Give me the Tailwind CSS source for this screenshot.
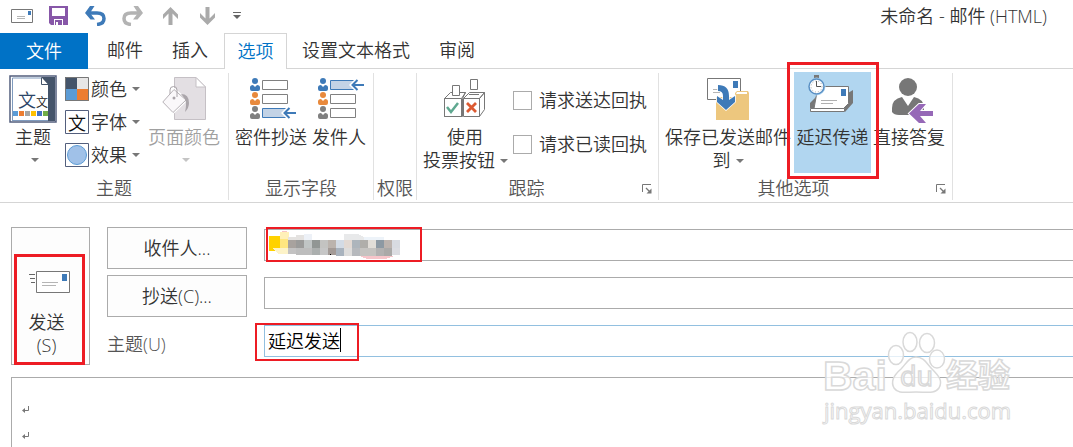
<!DOCTYPE html>
<html lang="zh-CN">
<head>
<meta charset="utf-8">
<meta name="viewport" content="width=device-width, initial-scale=1">
<title>未命名 - 邮件 (HTML)</title>
<script src="https://cdn.jsdelivr.net/npm/@tailwindcss/browser@4"></script>
</head>
<body class="relative flex min-h-screen flex-col overflow-hidden bg-white font-['Open_Sans','Noto_Sans_CJK_SC',sans-serif] text-[18px] leading-[23px] font-[350] text-[#333]">

<svg class="hidden">
  <defs>
    <symbol id="caret" viewBox="0 0 8 4"><path d="M0 0h8L4 4z" fill="currentColor"/></symbol>
    <symbol id="launcher" viewBox="0 0 10 10"><path d="M.5 8V.5H9" fill="none" stroke="#777"/><path d="M4 4l4 4" stroke="#777" stroke-width="1.3"/><path d="M9.5 4.500v5h-5z" fill="#777"/></symbol>
    <symbol id="person" viewBox="0 0 10 13"><circle cx="5" cy="3" r="3" fill="currentColor"/><path d="M2 13Q0 13 0 11V9.500Q0 7 3 7l2 2 2-2q3 0 3 2.500V11q0 2-2 2z" fill="currentColor"/></symbol>
  </defs>
</svg>

<!-- Title bar -->
<header class="flex h-[33px] items-center pr-[26px] pb-0.5 pl-[11px]">
  <div class="flex flex-1 items-center">
    <button aria-label="发送" class="mr-4"><svg width="22" height="14" viewBox="0 0 22 14"><path d="M.5.5h21v13H.5z" fill="#fff" stroke="#777"/><path d="M6 7.500h8M6 9.500h8" stroke="#b5b5b5"/><path d="M17 2h3v4h-3z" fill="#3e7ab8"/></svg></button>
    <button aria-label="保存" class="mr-[17px]"><svg width="19" height="19" viewBox="0 0 19 19"><path d="M0 0h19v19H2l-2-2z" fill="#8757a8"/><path d="M3 2h13v8H3zM5 13h9v6H5z" fill="#fff"/><path d="M6 14h7v5H9v-3H7v3H6z" fill="#8757a8"/><path d="M7 16h2v3H7z" fill="#fff"/></svg></button>
    <button aria-label="撤消" class="mr-4"><svg width="21" height="20" viewBox="0 0 21 20"><path d="M3 7h9q7 0 7 5.500t-7 6" fill="none" stroke="#3e7ab8" stroke-width="3.500"/><path d="M5 0h4.500L5 7l5 6.500H5.500L0 7z" fill="#3e7ab8"/></svg></button>
    <button aria-label="恢复" class="mr-5"><svg width="21" height="20" viewBox="0 0 21 20"><path d="M18 7h-9q-7 0-7 5.500t7 6" fill="none" stroke="#b3b3b3" stroke-width="3.500"/><path d="M16 0h-4.500L16 7l-5 6.500h4.500L21 7z" fill="#b3b3b3"/></svg></button>
    <button aria-label="上一项" class="mr-[22px]"><svg width="15" height="18" viewBox="0 0 15 18"><path d="M7.500 0L15 7.500V12L9.500 6.500V18h-4V6.500L0 12V7.500z" fill="#aaa"/></svg></button>
    <button aria-label="下一项" class="mr-[18px]"><svg width="15" height="18" viewBox="0 0 15 18"><path d="M7.500 18L15 10.500V6L9.500 11.500V0h-4v11.500L0 6v4.500z" fill="#aaa"/></svg></button>
    <button aria-label="自定义快速访问工具栏"><svg width="8" height="7" viewBox="0 0 8 7"><path d="M0 .5h8" stroke="#666"/><path d="M0 3h8L4 7z" fill="#666"/></svg></button>
  </div>
  <h1 class="pt-0.5 font-[350]">未命名 - 邮件 (HTML)</h1>
</header>

<!-- Tabs -->
<nav class="flex h-9">
  <button class="w-22 bg-[#0072c6] text-white">文件</button>
  <div class="flex flex-1 border-b border-[#d5d5d5]">
    <button class="ml-[19px]">邮件</button>
    <button class="mr-4 ml-[29px]">插入</button>
    <button class="-mb-px w-[63px] border border-b-0 border-[#d5d5d5] bg-white text-[#0072c6]">选项</button>
    <button class="ml-[15px]">设置文本格式</button>
    <button class="ml-[29px]">审阅</button>
  </div>
</nav>

<!-- Ribbon -->
<main class="flex flex-1 flex-col">
<section class="flex border-b border-[#d5d5d5] pt-1 pb-0.5 whitespace-nowrap">

  <div class="flex w-[229px] shrink-0 flex-col border-r border-[#e1e1e1]">
    <div class="flex h-[104px] pl-[9px]">
      <button class="flex w-12 flex-col items-center">
        <span class="flex h-[53px] pt-0.5"><svg width="48" height="48" viewBox="0 0 48 48"><path d="M1 1h46v46H1z" fill="#fff" stroke="#535f7d" stroke-width="1.500"/><path d="M39 2h7v44h-7z" fill="#44546a"/><path d="M32 2h7v8z" fill="#44546a"/><path d="M32.500 2.500v7H39" fill="#fff" stroke="#44546a"/><path d="M3.500 45V3H32M3 45.500h36" fill="none" stroke="#7f9abd"/><text x="9" y="32" font-size="18" fill="#2c4568">文</text><text x="27" y="32" font-size="12" fill="#222">文</text><path d="M4 36h5v5H4z" fill="#5b9bd5"/><path d="M10 36h5v5h-5z" fill="#ed7d31"/><path d="M16 36h5v5h-5z" fill="#a5a5a5"/><path d="M22 36h5v5h-5z" fill="#ffc000"/><path d="M28 36h5v5h-5z" fill="#4472c4"/><path d="M34 36h5v5h-5z" fill="#70ad47"/></svg></span>
        <span>主题</span>
        <span class="flex h-[21px] items-center pl-1 text-[#777]"><svg width="8" height="4"><use href="#caret"/></svg></span>
      </button>
      <div class="ml-2 flex flex-col gap-[9px] pt-1">
        <button class="flex h-6 items-center gap-0.5"><svg width="24" height="24" viewBox="0 0 24 24"><path d="M0 0h12v12H0z" fill="#44546a"/><path d="M12 0h12v12H12z" fill="#e7e6e6"/><path d="M0 12h12v12H0z" fill="#5b9bd5"/><path d="M12 12h12v12H12z" fill="#ed7d31"/><path d="M.5.5h23v23H.5z" fill="none" stroke="#777"/></svg><span>颜色</span><svg class="ml-[3px] text-[#777]" width="8" height="4"><use href="#caret"/></svg></button>
        <button class="flex h-6 items-center gap-0.5"><svg width="24" height="24" viewBox="0 0 24 24"><path d="M.5.5h23v23H.5z" fill="#fff" stroke="#535f7d"/><text x="3" y="20" font-size="18" fill="#111">文</text></svg><span>字体</span><svg class="ml-[3px] text-[#777]" width="8" height="4"><use href="#caret"/></svg></button>
        <button class="flex h-6 items-center gap-0.5"><svg width="24" height="24" viewBox="0 0 24 24"><path d="M.5.5h23v23H.5z" fill="#fff" stroke="#535f7d"/><circle cx="12" cy="12" r="9.500" fill="#a0c1e8" stroke="#5b9bd5"/></svg><span>效果</span><svg class="ml-[3px] text-[#777]" width="8" height="4"><use href="#caret"/></svg></button>
      </div>
      <button disabled class="ml-2 flex flex-col items-center text-[#a0a0a0]">
        <span class="flex h-[53px] pt-1"><svg width="44" height="44" viewBox="0 0 44 44"><path d="M12.500.5H34L43.500 10v32.500h-31z" fill="#e3dfe3" stroke="#c5c0c5"/><path d="M34 .5V10h9.500z" fill="#fff" stroke="#c5c0c5"/><path d="M12 12.500L24 23 11 35.500.8 25z" fill="#faf8fa" stroke="#fff" stroke-width="3"/><path d="M12 12.500L24 23 11 35.500.8 25z" fill="#faf8fa" stroke="#b5b0b5"/><path d="M8 17v-4q0-3.500 3.500-3.500T15 13v7" fill="none" stroke="#aaa5aa"/><circle cx="12" cy="21" r="1.500" fill="#aaa5aa"/><path d="M19 17q8 0 8 9 0 5-4 9 2-8 0-13z" fill="#aaa5aa"/></svg></span>
        <span>页面颜色</span>
        <span class="flex h-[21px] items-center pl-1 text-[#c4c4c4]"><svg width="8" height="4"><use href="#caret"/></svg></span>
      </button>
    </div>
    <div class="text-center text-[#555]">主题</div>
  </div>

  <div class="flex w-[145px] shrink-0 flex-col border-r border-[#e1e1e1]">
    <div class="flex h-[104px] gap-[5px] pl-1.5">
      <button class="flex flex-col items-center">
        <span class="flex h-[53px] pt-[5px] pl-1"><svg width="46" height="42" viewBox="0 0 46 42"><g color="#3e7ab8"><use href="#person" width="10" height="13"/></g><g color="#e8893c"><use href="#person" y="14" width="10" height="13"/></g><g color="#808080"><use href="#person" y="28" width="10" height="13"/></g><path d="M12.500 2.500h25v9h-25zM12.500 16.500h25v9h-25z" fill="#fff" stroke="#808080"/><path d="M12.500 30.500h24v9h-24z" fill="#c3d3e6" stroke="#3e7ab8"/><path d="M38 28l-7 7 7 7z" fill="#fff"/><path d="M46 35H35M39.500 30L34.500 35l5 5" fill="none" stroke="#3e7ab8" stroke-width="2"/></svg></span>
        <span>密件抄送</span>
      </button>
      <button class="flex flex-col items-center">
        <span class="flex h-[53px] pt-[5px] pl-1"><svg width="46" height="42" viewBox="0 0 46 42"><g color="#3e7ab8"><use href="#person" width="10" height="13"/></g><g color="#e8893c"><use href="#person" y="14" width="10" height="13"/></g><g color="#808080"><use href="#person" y="28" width="10" height="13"/></g><path d="M12.500 16.500h25v9h-25zM12.500 30.500h25v9h-25z" fill="#fff" stroke="#808080"/><path d="M12.500 2.500h24v9h-24z" fill="#c3d3e6" stroke="#3e7ab8"/><path d="M38 0l-7 7 7 7z" fill="#fff"/><path d="M46 7H35M39.500 2L34.500 7l5 5" fill="none" stroke="#3e7ab8" stroke-width="2"/></svg></span>
        <span>发件人</span>
      </button>
    </div>
    <div class="text-center text-[#555]">显示字段</div>
  </div>

  <div class="flex w-[43px] shrink-0 flex-col border-r border-[#e1e1e1]">
    <div class="h-[104px]"></div>
    <div class="text-center text-[#555]">权限</div>
  </div>

  <div class="flex w-[242px] shrink-0 flex-col border-r border-[#e1e1e1]">
    <div class="flex h-[104px] pl-1.5">
      <button class="flex w-[90px] flex-col">
        <span class="flex h-[53px] pt-1.5 pl-[21px]"><svg width="42" height="41" viewBox="0 0 42 41"><g fill="#fff" stroke="#777"><path d="M.5 19.500L6.500 13.500h15l-3 6v18H.5zM.5 19.500h17v18H.5zM17.500 19.500l4-6M19.500 19.500l6-6h15l-5 6zM35.500 19.500l5-6v17l-5 7zM19.500 19.500h16v18h-16z"/><path d="M8.500 6.500h7v10h-7zM26.500.5h7v10h-7z"/></g><path d="M25 15.500h10" stroke="#777"/><path d="M3 28l4 5 7-9" fill="none" stroke="#5fa890" stroke-width="2.500"/><path d="M23 24l9 9M32 24l-9 9" stroke="#dc5a32" stroke-width="2.800"/></svg></span>
        <span class="w-[84px]">使用</span>
        <span class="flex items-center gap-[5px]">投票按钮<svg class="text-[#777]" width="8" height="4"><use href="#caret"/></svg></span>
      </button>
      <div class="flex flex-col gap-[21px] pt-4">
        <label class="flex items-center gap-[7px]"><input type="checkbox" class="size-[19px] appearance-none border border-[#ababab] bg-white">请求送达回执</label>
        <label class="flex items-center gap-[7px]"><input type="checkbox" class="size-[19px] appearance-none border border-[#ababab] bg-white">请求已读回执</label>
      </div>
    </div>
    <div class="flex items-center pr-1.5 text-[#555]"><span class="flex-1 pr-1.5 text-center">跟踪</span><button aria-label="跟踪选项"><svg width="10" height="10"><use href="#launcher"/></svg></button></div>
  </div>

  <div class="flex w-[294px] shrink-0 flex-col border-r border-[#e1e1e1]">
    <div class="flex h-[104px] pl-1.5">
      <button class="flex flex-col items-center">
        <span class="flex h-[53px] pt-[5px]"><svg width="43" height="43" viewBox="0 0 43 43"><path d="M.5.5h33v21H.5z" fill="#fff" stroke="#777"/><path d="M6 11.500h8M6 14.500h7" stroke="#b5b5b5"/><path d="M26 3h5v7h-5z" fill="#3e7ab8"/><path d="M9 19h19v-4l2-2h11l1 2v27H9z" fill="#edc77e"/><path d="M30 14h10v2H29z" fill="#fff"/><path d="M11 7q11 0 11 11v4l6-4v6l-9 8-9-8v-6l6 4v-4q0-5-5-5z" fill="#3e7ab8" stroke="#fff" stroke-width="1.500" paint-order="stroke"/></svg></span>
        <span>保存已发送邮件</span>
        <span class="flex items-center gap-[5px]">到<svg class="text-[#777]" width="8" height="4"><use href="#caret"/></svg></span>
      </button>
      <button class="relative -mt-px ml-[3px] flex h-[101px] w-[77px] flex-col items-center bg-[#b1d6f0]">
        <span class="flex h-[54px] pt-[3px] pr-1"><svg width="46" height="38" viewBox="0 0 46 38"><path d="M2 28l8-8v6l-3 7H2zM45 15v13l-8 9-1-5 4-14z" fill="#777"/><path d="M10 11.500h30.500v17l-5 5H6z" fill="#fff" stroke="#777"/><path d="M2.500 33.500h34v3h-34z" fill="#fff" stroke="#777"/><path d="M13 25.500h16M13 28.500h12" stroke="#b0b0b0"/><path d="M33 14h5v7h-5z" fill="#3e7ab8"/><path d="M6 0h5v4H6z" fill="#777"/><circle cx="8.500" cy="11.500" r="9" fill="#b1d6f0"/><circle cx="8.500" cy="11.500" r="7.500" fill="#fff" stroke="#5a90c4" stroke-width="1.500"/><circle cx="8.500" cy="11.500" r="5.500" fill="none" stroke="#aaa" stroke-dasharray="1 2"/><path d="M8.500 6v5.500H13" fill="none" stroke="#555"/></svg></span>
        <span>延迟传递</span>
        <span class="pointer-events-none absolute -top-2.5 -left-[7px] h-[117px] w-[92px] border-3 border-[#ed1c24]"></span>
      </button>
      <button class="ml-0.5 flex flex-col items-center">
        <span class="flex h-[53px] pt-[5px] pl-1.5"><svg width="42" height="46" viewBox="0 0 42 46"><circle cx="17" cy="9" r="9" fill="#777"/><path d="M1 34v-4q0-9 10-11l6 9 6-9q10 2 10 11v4q-3 3-8 3H8q-5 0-7-3z" fill="#777"/><path d="M42 33v5H29l6 7h-7L18 35.500l10-9.500h7l-6 7z" fill="#9668b7" stroke="#fff" stroke-width="2" paint-order="stroke"/></svg></span>
        <span>直接答复</span>
      </button>
    </div>
    <div class="flex items-center pr-1.5 text-[#555]"><span class="flex-1 pr-2 text-center">其他选项</span><button aria-label="其他选项设置"><svg width="10" height="10"><use href="#launcher"/></svg></button></div>
  </div>
</section>

<!-- Message header -->
<form class="flex pt-6 pl-[11px]">
  <button type="button" class="relative flex h-[138px] w-[79px] shrink-0 flex-col items-center border border-[#ababab] bg-[#fdfdfd] pt-[43px]">
    <svg class="mr-0.5" width="42" height="22" viewBox="0 0 42 22"><path d="M7.500.5h33v21h-33z" fill="#fff" stroke="#777"/><path d="M13 11.500h16M13 14.500h14" stroke="#b5b5b5"/><path d="M33 3h5v7h-5z" fill="#3e7ab8"/><path d="M0 3.500h6M1 7.500h5M2 11.500h4" stroke="#666"/></svg>
    <span class="mt-[18px] mr-2">发送<br>(S)</span>
    <span class="pointer-events-none absolute top-[26px] left-0.5 h-[111px] w-[71px] border-3 border-[#ed1c24]"></span>
  </button>
  <div class="ml-[17px] flex-1">
    <div class="flex h-12 items-start">
      <button type="button" class="h-[42px] w-[140px] border border-[#ababab] bg-[#fdfdfd]">收件人...</button>
      <div class="relative mt-0.5 ml-[17px] flex-1">
        <input aria-label="收件人" class="h-8 w-full border border-r-0 border-[#ababab] bg-white px-[3px] outline-none">
        <svg class="absolute top-0.5 left-[5px]" width="132" height="29" viewBox="0 0 132 29" shape-rendering="crispEdges">
          <path d="M0 5h11v15H0z" fill="#ffd200"/><path d="M13 0h5v2h-5z" fill="#f8c4c4"/><path d="M11 1h9v7h-9z" fill="#fff0b8"/><path d="M11 8h8v9h-8z" fill="#ffe680"/><path d="M4 17h15v6H9z" fill="#fdf3c8"/>
          <path d="M19 6h8v3h-8zM27 4h8v5h-8z" fill="#e4e2e0"/><path d="M35 3h8v6h-8z" fill="#edf1f7"/><path d="M75 3h14l6 3v3H75z" fill="#e8e9ea"/><path d="M95 6h20v3H95z" fill="#edf3f9"/>
          <path d="M91 25h34l-8 3h-19z" fill="#f7c5ca"/>
          <path d="M19 9h8v8h-8z" fill="#a8a29e"/><path d="M27 9h8v8h-8z" fill="#9b9b9a"/><path d="M35 9h8v8h-8z" fill="#c0c5c5"/><path d="M43 9h8v8h-8z" fill="#919694"/><path d="M51 9h8v8h-8z" fill="#c3c3c1"/><path d="M59 9h8v8h-8z" fill="#bbb3ad"/><path d="M67 9h8v8h-8z" fill="#d3dbe5"/><path d="M75 9h8v8h-8z" fill="#e2d9d3"/><path d="M83 9h8v8h-8z" fill="#adb5bc"/><path d="M91 9h8v8h-8z" fill="#b0aeaa"/><path d="M99 9h8v8h-8z" fill="#e1ddd7"/><path d="M107 9h8v8h-8z" fill="#8d99a3"/><path d="M115 9h8v8h-8z" fill="#bcb3ae"/><path d="M123 9h8v8h-8z" fill="#d8dbe1"/>
          <path d="M19 17h8v6h-8z" fill="#c3c2c2"/><path d="M27 17h16v7H27z" fill="#bdbdbd"/><path d="M43 17h8v7h-8z" fill="#abafae"/><path d="M51 17h8v7h-8z" fill="#c6c6c6"/><path d="M59 17h8v7h-8z" fill="#a39a96"/><path d="M67 17h8v8h-8z" fill="#a9b3be"/><path d="M75 17h8v8h-8z" fill="#dedddc"/><path d="M83 17h8v8h-8z" fill="#b6b9bd"/><path d="M91 17h16v8H91z" fill="#c5c3c0"/><path d="M107 17h8v8h-8z" fill="#b2b1b1"/><path d="M115 17h8v8h-8z" fill="#aaa9a8"/><path d="M123 17h8v7h-8z" fill="#dcdde2"/><path d="M61 23h1v1h-1z" fill="#000"/>
        </svg>
        <span class="pointer-events-none absolute -top-0.5 left-0.5 h-[35px] w-[156px] border-2 border-[#ed1c24]"></span>
      </div>
    </div>
    <div class="flex h-12 items-start">
      <button type="button" class="h-[42px] w-[140px] border border-[#ababab] bg-[#fdfdfd]">抄送(C)...</button>
      <input aria-label="抄送" class="mt-0.5 ml-[17px] h-8 flex-1 border border-r-0 border-[#ababab] bg-white px-[3px] outline-none">
    </div>
    <div class="flex h-12 items-start">
      <label for="subject" class="mt-[5px] w-[140px] leading-8 text-[#555]">主题(U)</label>
      <div class="relative mt-0.5 ml-[17px] flex-1">
        <input id="subject" value="延迟发送" class="h-8 w-full border border-r-0 border-[#92c0e0] bg-white px-[3px] pb-0.5 text-black outline-none">
        <span class="absolute top-[3px] left-[76px] h-6 w-px bg-black"></span>
        <span class="pointer-events-none absolute -top-0.5 -left-[9px] h-[38px] w-[104px] border-2 border-[#ed1c24]"></span>
      </div>
    </div>
  </div>
</form>

<!-- Message body -->
<div class="mt-1.5 ml-[11px] flex flex-1 flex-col gap-[19px] border-t border-l border-[#ababab] pt-7 pl-2.5">
  <svg width="8" height="7" viewBox="0 0 8 7"><path d="M6.500 0v4.500H1" fill="none" stroke="#777"/><path d="M0 4.500L3 2v5z" fill="#777"/></svg>
  <svg width="8" height="7" viewBox="0 0 8 7"><path d="M6.500 0v4.500H1" fill="none" stroke="#777"/><path d="M0 4.500L3 2v5z" fill="#777"/></svg>
</div>
</main>

<!-- Site watermark -->
<svg class="pointer-events-none absolute right-[53px] bottom-0 font-['Open_Sans','Noto_Sans_CJK_SC',sans-serif] font-bold" width="200" height="120" viewBox="0 0 200 120">
  <g fill="#fff" fill-opacity=".75" stroke="#d9d9d9" stroke-width="1.500">
    <ellipse cx="76" cy="28" rx="7.500" ry="9.500"/><ellipse cx="90" cy="15" rx="7" ry="9.500"/><ellipse cx="107" cy="16" rx="7.500" ry="9.500"/><ellipse cx="117" cy="32" rx="7.500" ry="9"/>
    <path d="M96 30c8 0 11 7 16 12 7 7 11 12 7 19-4 6-12 4-23 4s-18 2-22-4c-4-7 0-13 7-19 5-5 8-12 15-12z"/>
    <text x="3" y="63" font-size="41" font-family="Liberation Sans">Bai</text>
    <text x="80" y="59" font-size="27" font-weight="400">du</text>
    <text x="126" y="60" font-size="32">经验</text>
    <text x="4" y="92" font-size="22" font-weight="400" stroke-width="1">jingyan.baidu.com</text>
  </g>
</svg>
</body>
</html>
